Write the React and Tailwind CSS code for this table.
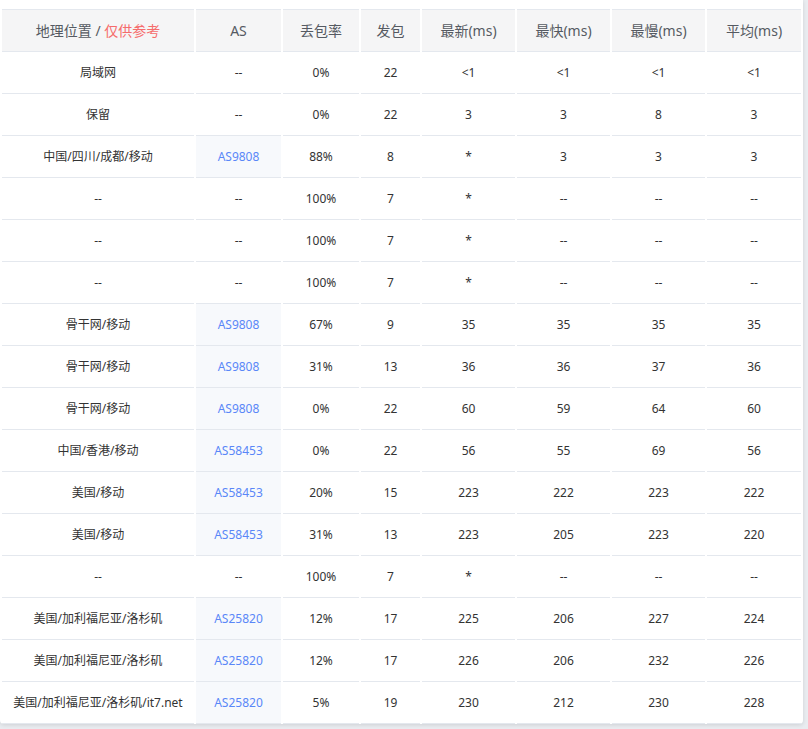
import React from "react";

const headers = ["AS", "丢包率", "发包", "最新(ms)", "最快(ms)", "最慢(ms)", "平均(ms)"];

const widths = ["w-[192px]", "w-[85px]", "w-[76px]", "w-[59px]", "w-[93px]", "w-[93px]", "w-[93px]", "w-[94px]"];

const hops = [
  ["局域网", "--", "0%", "22", "<1", "<1", "<1", "<1"],
  ["保留", "--", "0%", "22", "3", "3", "8", "3"],
  ["中国/四川/成都/移动", "AS9808", "88%", "8", "*", "3", "3", "3"],
  ["--", "--", "100%", "7", "*", "--", "--", "--"],
  ["--", "--", "100%", "7", "*", "--", "--", "--"],
  ["--", "--", "100%", "7", "*", "--", "--", "--"],
  ["骨干网/移动", "AS9808", "67%", "9", "35", "35", "35", "35"],
  ["骨干网/移动", "AS9808", "31%", "13", "36", "36", "37", "36"],
  ["骨干网/移动", "AS9808", "0%", "22", "60", "59", "64", "60"],
  ["中国/香港/移动", "AS58453", "0%", "22", "56", "55", "69", "56"],
  ["美国/移动", "AS58453", "20%", "15", "223", "222", "223", "222"],
  ["美国/移动", "AS58453", "31%", "13", "223", "205", "223", "220"],
  ["--", "--", "100%", "7", "*", "--", "--", "--"],
  ["美国/加利福尼亚/洛杉矶", "AS25820", "12%", "17", "225", "206", "227", "224"],
  ["美国/加利福尼亚/洛杉矶", "AS25820", "12%", "17", "226", "206", "232", "226"],
  ["美国/加利福尼亚/洛杉矶/it7.net", "AS25820", "5%", "19", "230", "212", "230", "228"],
];

export default function App() {
  return (
    <div className="min-h-screen bg-[#e9ecf0] font-['Noto_Sans','Noto_Sans_CJK_SC',sans-serif]">
      <div className="w-[803px] bg-white pt-[9px] rounded-b-[4px] shadow-[0_1px_4px_rgba(0,0,0,0.12)]">
        <table className="w-[803px] table-fixed border-separate border-spacing-x-[2px] border-spacing-y-0">
          <thead>
            <tr className="h-[43px]">
              <th className={`${widths[0]} bg-[#f5f5f6] border-y border-[#e4e8ee] text-[14px] font-normal text-[#555a62]`}>
                地理位置 / <span className="text-[#f56c6c]">仅供参考</span>
              </th>
              {headers.map((h, i) => (
                <th
                  key={h}
                  className={`${widths[i + 1]} bg-[#f5f5f6] border-y border-[#e4e8ee] text-[14px] font-normal text-[#555a62]`}
                >
                  {h}
                </th>
              ))}
            </tr>
          </thead>
          <tbody>
            {hops.map((row, r) => (
              <tr key={r} className="h-[42px]">
                {row.map((cell, c) => {
                  const isAs = c === 1 && cell !== "--";
                  return (
                    <td
                      key={c}
                      className={`${
                        isAs ? "bg-[#f7f9fc] text-[#5a87f8]" : "text-[#333]"
                      } border-b border-[#e4e8ee] text-center text-[12px] whitespace-nowrap p-0`}
                    >
                      {cell}
                    </td>
                  );
                })}
              </tr>
            ))}
          </tbody>
        </table>
      </div>
    </div>
  );
}
